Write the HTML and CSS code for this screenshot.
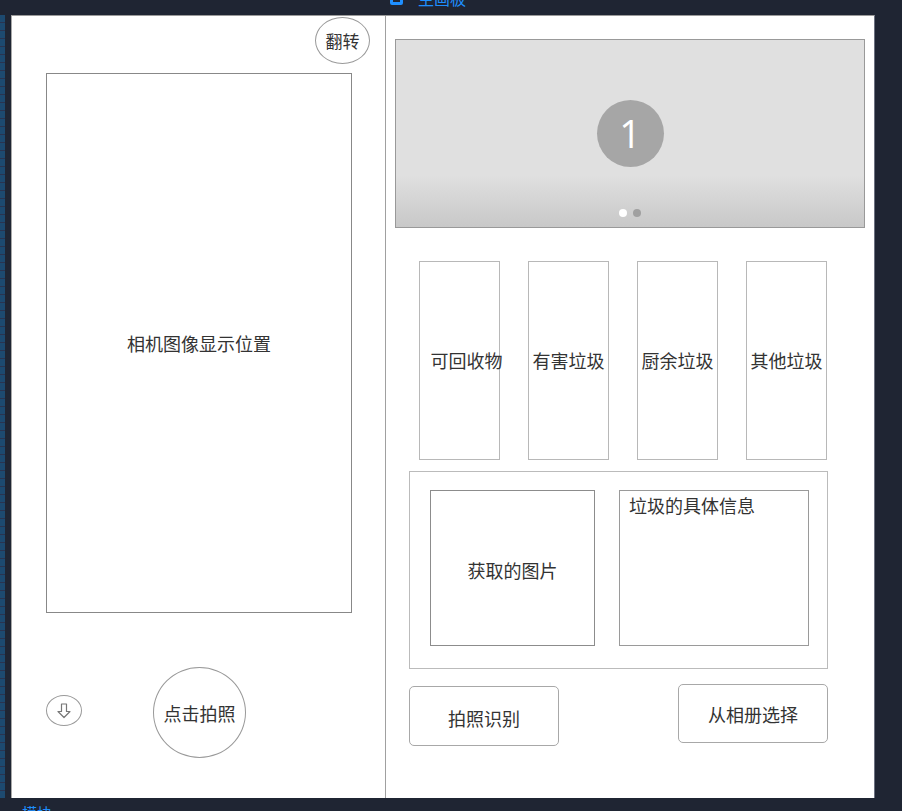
FILE: index.html
```html
<!DOCTYPE html>
<html lang="zh-CN">
<head>
<meta charset="utf-8">
<title>垃圾分类</title>
<link rel="stylesheet" href="styles.css">
</head>
<body>
<div class="topbar">
  <span class="board-icon"></span>
  <span class="board-title">主画板</span>
</div>
<div class="main">
  <div class="ruler"></div>
  <div class="canvas">
    <section class="left">
      <div class="left-head">
        <div class="flip">翻转</div>
      </div>
      <div class="camera">相机图像显示位置</div>
      <div class="left-foot">
        <div class="down">
          <svg width="20" height="20" viewBox="0 0 20 20"><path d="M7.5 3h5v7.5h3.5L10 16.5 4 10.5h3.5z" fill="none" stroke="#777" stroke-width="1.2" stroke-linejoin="round"/></svg>
        </div>
        <div class="shoot">点击拍照</div>
      </div>
    </section>
    <section class="right">
      <div class="carousel">
        <div class="slide-num">1</div>
        <div class="dots"><span class="dot dot-on"></span><span class="dot"></span></div>
      </div>
      <div class="cats">
        <div class="cat cat-first">可回收物</div>
        <div class="cat">有害垃圾</div>
        <div class="cat">厨余垃圾</div>
        <div class="cat">其他垃圾</div>
      </div>
      <div class="info">
        <div class="pic">获取的图片</div>
        <div class="detail">垃圾的具体信息</div>
      </div>
      <div class="actions">
        <div class="btn btn-left">拍照识别</div>
        <div class="btn btn-right">从相册选择</div>
      </div>
    </section>
  </div>
</div>
<div class="bottombar"><span class="bottom-title">模块</span></div>
</body>
</html>
```
FILE: styles.css
```css
* { box-sizing: border-box; }
html, body { margin: 0; padding: 0; }
body {
  width: 902px;
  height: 811px;
  overflow: hidden;
  background: #1f2533;
  font-family: "Noto Sans CJK SC", "Noto Sans", sans-serif;
  color: #333;
}
.topbar {
  height: 15px;
  overflow: hidden;
  display: flex;
  align-items: flex-start;
  padding-left: 390px;
  gap: 15px;
}
.board-icon {
  flex: none;
  width: 13px;
  height: 14px;
  margin-top: -9px;
  border: 3px solid #1e8fff;
  border-radius: 2px;
}
.board-title {
  color: #1e8fff;
  font-size: 16px;
  line-height: 16px;
  margin-top: -10px;
}
.main {
  display: flex;
  height: 783px;
}
.ruler {
  width: 5px;
  margin-right: 6px;
  background: repeating-linear-gradient(to bottom, #1d4a70 0 7px, #2a3450 7px 8px);
}
.canvas {
  width: 864px;
  height: 783px;
  background: #fff;
  border-top: 1px solid #9a9a9a;
  border-left: 1px solid #a8a8a8;
  border-right: 1px solid #6b7080;
  display: flex;
}
.left {
  width: 374px;
  border-right: 1px solid #a0a0a0;
  display: flex;
  flex-direction: column;
}
.left-head {
  display: flex;
  justify-content: flex-end;
  padding: 1px 15px 0 0;
}
.flip {
  width: 55px;
  height: 47px;
  border: 1px solid #999;
  border-radius: 50%;
  display: flex;
  align-items: center;
  justify-content: center;
  font-size: 17px;
}
.camera {
  margin: 9px 0 0 34px;
  width: 306px;
  height: 540px;
  border: 1px solid #888;
  display: flex;
  align-items: center;
  justify-content: center;
  font-size: 18px;
}
.left-foot {
  display: flex;
  align-items: center;
  margin-top: 54px;
  padding-left: 34px;
}
.down {
  width: 36px;
  height: 31px;
  margin-top: -4px;
  border: 1px solid #999;
  border-radius: 50%;
  display: flex;
  align-items: center;
  justify-content: center;
}
.shoot {
  margin-left: 71px;
  width: 93px;
  height: 91px;
  border: 1px solid #999;
  border-radius: 50%;
  display: flex;
  align-items: center;
  justify-content: center;
  font-size: 18px;
}
.right {
  flex: 1;
  padding: 23px 0 0 9px;
  display: flex;
  flex-direction: column;
}
.carousel {
  width: 470px;
  height: 189px;
  border: 1px solid #999;
  background: linear-gradient(to bottom, #e0e0e0 0, #e0e0e0 135px, #c8c8c8 100%);
  display: flex;
  flex-direction: column;
  align-items: center;
}
.slide-num {
  margin-top: 60px;
  width: 67px;
  height: 67px;
  border-radius: 50%;
  background: #a6a6a6;
  color: #fff;
  font-family: "Open Sans", sans-serif;
  font-size: 38px;
  line-height: 67px;
  text-align: center;
}
.dots {
  display: flex;
  gap: 6px;
  margin-top: 42px;
}
.dot {
  width: 8px;
  height: 8px;
  border-radius: 50%;
  background: #a0a0a0;
}
.dot-on { background: #fff; }
.cats {
  display: flex;
  gap: 28px;
  margin: 33px 0 0 24px;
}
.cat {
  width: 81px;
  height: 199px;
  border: 1px solid #b8b8b8;
  display: flex;
  align-items: center;
  justify-content: center;
  white-space: nowrap;
  font-size: 18px;
  padding-bottom: 2px;
}
.cat-first { padding-left: 14px; }
.info {
  margin: 11px 0 0 14px;
  width: 419px;
  height: 198px;
  border: 1px solid #bbb;
  display: flex;
  gap: 24px;
  padding: 18px 0 0 20px;
}
.pic {
  width: 165px;
  height: 156px;
  border: 1px solid #8c8c8c;
  display: flex;
  align-items: center;
  justify-content: center;
  font-size: 18px;
  padding-top: 3px;
}
.detail {
  width: 190px;
  height: 156px;
  border: 1px solid #9a9a9a;
  font-size: 18px;
  line-height: 26px;
  padding: 1px 0 0 9px;
}
.actions {
  display: flex;
  justify-content: space-between;
  align-items: flex-start;
  width: 419px;
  margin: 17px 0 0 14px;
}
.btn {
  width: 150px;
  border: 1px solid #a8a8a8;
  border-radius: 5px;
  display: flex;
  align-items: center;
  justify-content: center;
  font-size: 18px;
}
.btn-left { height: 60px; padding-top: 3px; }
.btn-right { height: 59px; margin-top: -2px; }
.bottombar {
  height: 13px;
  overflow: hidden;
  padding-left: 22px;
}
.bottom-title {
  display: block;
  color: #1e8fff;
  font-size: 15px;
  line-height: 15px;
  margin-top: 7px;
}
```
